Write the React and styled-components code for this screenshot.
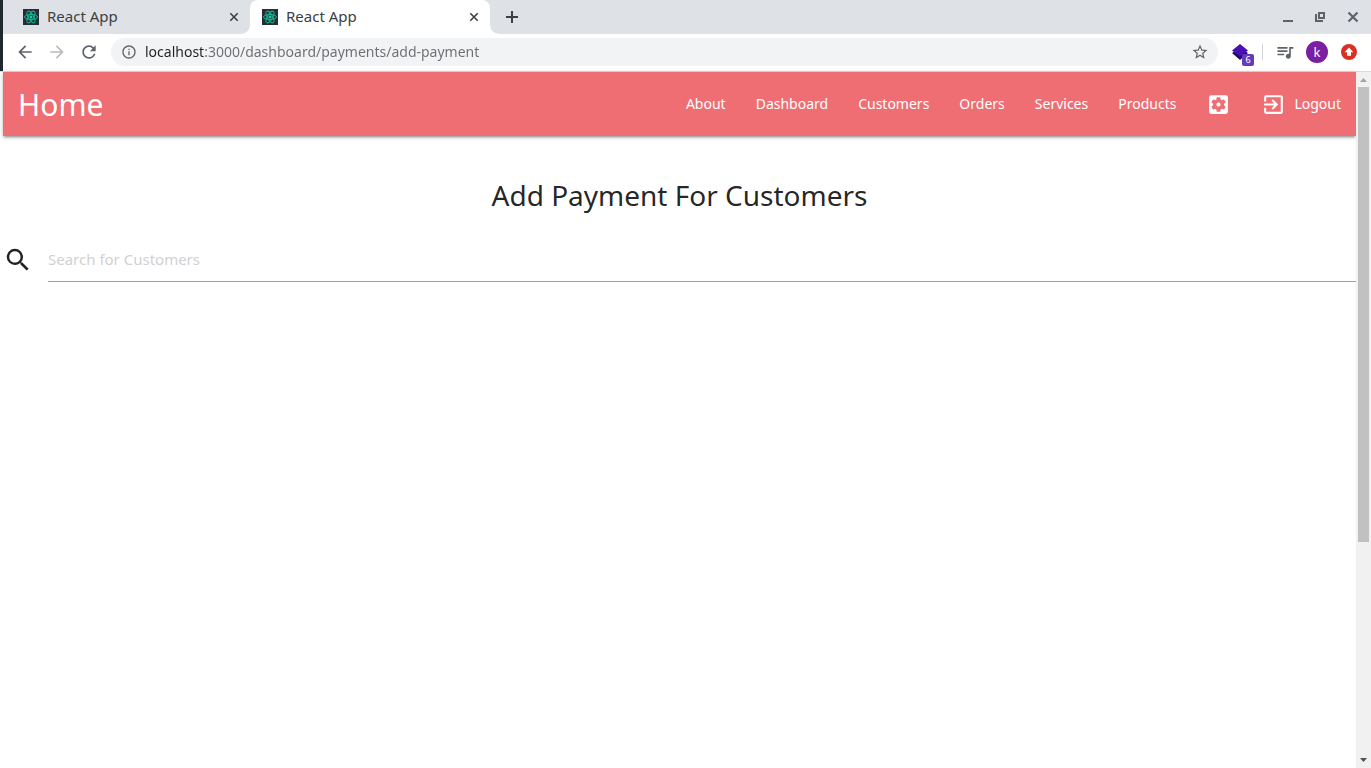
import React from "react";
import styled, { createGlobalStyle, css } from "styled-components";
import {
  MdArrowBack,
  MdArrowForward,
  MdRefresh,
  MdInfoOutline,
  MdStarBorder,
  MdQueueMusic,
  MdSettingsApplications,
  MdExitToApp,
  MdSearch,
} from "react-icons/md";

const Global = createGlobalStyle`
  *, *::before, *::after { box-sizing: border-box; }
  body { margin: 0; background: #fff; }
  button { padding: 0; border: 0; background: none; color: inherit; font: inherit; cursor: pointer; }
  svg { display: block; flex: none; }
  a { color: inherit; text-decoration: none; }
`;

const Window = styled.div`
  display: flex;
  flex-direction: column;
  min-height: 100vh;
  font-family: "Noto Sans", sans-serif;
  color: #3c4043;
`;

const Chrome = styled.header`
  border-left: 3px solid #1f282c;
`;

const TabStrip = styled.div`
  display: flex;
  height: 34px;
  background: #dee1e6;
`;

const Tab = styled.div`
  position: relative;
  display: flex;
  align-items: center;
  gap: 8px;
  width: ${(p) => (p.$active ? 240 : 247)}px;
  padding: 0 8px 0 ${(p) => (p.$active ? 12 : 20)}px;
  font-size: 15px;
  line-height: 20px;
  ${(p) =>
    p.$active &&
    css`
      background: #fff;
      border-radius: 8px 8px 0 0;
      &::before,
      &::after {
        content: "";
        position: absolute;
        bottom: 0;
        width: 8px;
        height: 8px;
      }
      &::before {
        right: 100%;
        background: radial-gradient(circle at 0 0, transparent 7px, #fff 8px);
      }
      &::after {
        left: 100%;
        background: radial-gradient(circle at 100% 0, transparent 7px, #fff 8px);
      }
    `}
`;

const TabTitle = styled.span`
  flex: 1;
  padding-bottom: 2px;
`;

const IconButton = styled.button`
  display: flex;
  align-items: center;
  justify-content: center;
  flex: none;
  width: ${(p) => p.$size || 16}px;
  height: ${(p) => p.$size || 16}px;
  color: ${(p) => p.$color || "#5f6368"};
`;

const NewTab = styled(IconButton)`
  align-self: center;
  margin-left: 12px;
`;

const WindowControls = styled.div`
  display: flex;
  align-items: center;
  gap: 16px;
  margin-left: auto;
  padding-right: 10px;
`;

const Toolbar = styled.div`
  display: flex;
  align-items: center;
  height: 37px;
  padding: 0 14px 1px 12px;
`;

const History = styled.div`
  display: flex;
  gap: 12px;
`;

const AddressBar = styled.div`
  display: flex;
  align-items: center;
  flex: 1;
  gap: 8px;
  height: 28px;
  margin: 0 12px;
  padding: 0 10px;
  border-radius: 14px;
  background: #f1f3f4;
  color: #5f6368;
`;

/* The host part of the address is darker than the path that follows it. */
const Address = styled.input`
  flex: 1;
  min-width: 0;
  height: 20px;
  padding: 0;
  border: 0;
  outline: 0;
  background: linear-gradient(90deg, #202124 60px, #6b6e72 60px);
  background-clip: text;
  -webkit-background-clip: text;
  color: transparent;
  caret-color: #202124;
  font-family: "Noto Sans", sans-serif;
  font-size: 14px;
  line-height: 20px;
`;

const Extensions = styled.div`
  display: flex;
  align-items: center;
`;

const LayersButton = styled(IconButton)`
  position: relative;
`;

const Count = styled.span`
  position: absolute;
  left: 12px;
  top: 12px;
  width: 12px;
  height: 12px;
  border-radius: 2px;
  background: #673ab7;
  color: #fff;
  font-size: 9px;
  line-height: 12px;
  text-align: center;
`;

const Divider = styled.span`
  width: 1px;
  height: 16px;
  margin: 0 12px;
  background: #d0d3d7;
`;

const Avatar = styled.button`
  width: 22px;
  height: 22px;
  margin: 0 13px 0 11px;
  border-radius: 50%;
  background: #7b1fa2;
  color: #fff;
  font-size: 13px;
  line-height: 20px;
`;

const Viewport = styled.div`
  display: flex;
  flex: 1;
  border-top: 1px solid #dadce0;
`;

const Page = styled.div`
  flex: 1;
  min-width: 0;
  padding-left: 3px;
  color: rgba(0, 0, 0, 0.87);
`;

const NavBar = styled.nav`
  display: flex;
  align-items: center;
  justify-content: space-between;
  height: 64px;
  padding-left: 15px;
  background: #ee6e73;
  color: #fff;
  box-shadow: 0 2px 2px 0 rgba(0, 0, 0, 0.14), 0 3px 1px -2px rgba(0, 0, 0, 0.12),
    0 1px 5px 0 rgba(0, 0, 0, 0.2);
`;

const Brand = styled.a`
  padding-top: 2px;
  font-size: 30px;
  line-height: 62px;
`;

const NavList = styled.ul`
  display: flex;
  margin: 0;
  padding: 0;
  list-style: none;
`;

const NavLink = styled.a`
  display: flex;
  align-items: center;
  gap: 8px;
  height: 64px;
  padding: 0 15px;
  font-size: 14px;
  line-height: 20px;
`;

const Title = styled.h1`
  margin: 39px 0 22px;
  font-size: 28px;
  font-weight: 400;
  line-height: 40px;
  text-align: center;
`;

const SearchField = styled.label`
  display: flex;
  align-items: center;
  gap: 15px;
`;

const SearchInput = styled.input`
  flex: 1;
  min-width: 0;
  height: 45px;
  padding: 0;
  border: 0;
  border-bottom: 1px solid #9e9e9e;
  outline: 0;
  background: transparent;
  font-family: "Noto Sans", sans-serif;
  font-size: 15px;

  &::placeholder {
    color: #d1d1d1;
  }
`;

const ScrollTrack = styled.div`
  display: flex;
  flex-direction: column;
  align-items: center;
  width: 15px;
  background: #f1f1f1;
`;

const ScrollArrow = styled(IconButton)`
  width: 15px;
  height: 15px;
`;

const ScrollThumb = styled.div`
  flex: 456;
  width: 11px;
  background: #c1c1c1;
`;

const ScrollRest = styled.div`
  flex: 211;
`;

function Favicon() {
  return (
    <svg width="16" height="16" viewBox="0 0 16 16" aria-hidden="true">
      <rect width="16" height="16" fill="#282c34" />
      <g fill="none" stroke="#10b890" strokeWidth="1">
        <ellipse cx="8" cy="8" rx="6.5" ry="2.6" />
        <ellipse cx="8" cy="8" rx="6.5" ry="2.6" transform="rotate(60 8 8)" />
        <ellipse cx="8" cy="8" rx="6.5" ry="2.6" transform="rotate(120 8 8)" />
      </g>
      <circle cx="8" cy="8" r="1.5" fill="#12d6a4" />
    </svg>
  );
}

function BrowserTab({ active }) {
  return (
    <Tab $active={active}>
      <Favicon />
      <TabTitle>React App</TabTitle>
      <IconButton aria-label="Close tab" $color="#3c4043">
        <svg width="16" height="16" viewBox="0 0 16 16">
          <path d="M4.300 4.300l7.400 7.400M11.700 4.300l-7.400 7.400" stroke="currentColor" strokeWidth="1.600" />
        </svg>
      </IconButton>
    </Tab>
  );
}

const links = ["About", "Dashboard", "Customers", "Orders", "Services", "Products"];

export default function App() {
  return (
    <Window>
      <Global />
      <Chrome>
        <TabStrip>
          <BrowserTab />
          <BrowserTab active />
          <NewTab $size={20} $color="#3c4043" aria-label="New tab">
            <svg width="20" height="20" viewBox="0 0 20 20">
              <path d="M10 4v12M4 10h12" stroke="currentColor" strokeWidth="2" />
            </svg>
          </NewTab>
          <WindowControls>
            <IconButton aria-label="Minimize">
              <svg width="16" height="16" viewBox="0 0 16 16">
                <path d="M2 12h10" stroke="currentColor" strokeWidth="2" />
              </svg>
            </IconButton>
            <IconButton aria-label="Restore">
              <svg width="16" height="16" viewBox="0 0 16 16" fill="none" stroke="currentColor">
                <path d="M6 4h5v5H6z" strokeWidth="2" />
                <path d="M3 5v7h7" strokeWidth="2" />
              </svg>
            </IconButton>
            <IconButton aria-label="Close window">
              <svg width="16" height="16" viewBox="0 0 16 16">
                <path d="M3.500 3.500l9 9M12.500 3.500l-9 9" stroke="currentColor" strokeWidth="2.200" />
              </svg>
            </IconButton>
          </WindowControls>
        </TabStrip>
        <Toolbar>
          <History>
            <IconButton $size={20} aria-label="Back"><MdArrowBack size={20} /></IconButton>
            <IconButton $size={20} $color="#babcbe" aria-label="Forward"><MdArrowForward size={20} /></IconButton>
            <IconButton $size={20} aria-label="Reload"><MdRefresh size={20} /></IconButton>
          </History>
          <AddressBar>
            <MdInfoOutline size={16} />
            <Address
              type="text"
              aria-label="Address"
              defaultValue="localhost:3000/dashboard/payments/add-payment"
            />
            <IconButton aria-label="Bookmark"><MdStarBorder size={18} /></IconButton>
          </AddressBar>
          <Extensions>
            <LayersButton $size={20} aria-label="Layers extension">
              <svg width="20" height="20" viewBox="0 0 20 20">
                <path d="M2 11l8-5 8 5-8 7z" fill="#1f0a6b" />
                <path d="M2 8.500l8-6.500 8 6.500-8 6z" fill="#4a0fb5" />
              </svg>
              <Count>6</Count>
            </LayersButton>
            <Divider />
            <IconButton $size={20} aria-label="Media controls"><MdQueueMusic size={20} /></IconButton>
            <Avatar>k</Avatar>
            <IconButton aria-label="Update">
              <svg width="16" height="16" viewBox="0 0 16 16">
                <circle cx="8" cy="8" r="8" fill="#d93025" />
                <path d="M8 3.500L12.300 8.200H10V11.800H6V8.200H3.700z" fill="#fff" />
              </svg>
            </IconButton>
          </Extensions>
        </Toolbar>
      </Chrome>
      <Viewport>
        <Page>
          <NavBar>
            <Brand href="#home">Home</Brand>
            <NavList>
              {links.map((name) => (
                <li key={name}><NavLink href={"#" + name.toLowerCase()}>{name}</NavLink></li>
              ))}
              <li><NavLink href="#settings" aria-label="Settings"><MdSettingsApplications size={25} /></NavLink></li>
              <li><NavLink href="#logout"><MdExitToApp size={25} />Logout</NavLink></li>
            </NavList>
          </NavBar>
          <main>
            <Title>Add Payment For Customers</Title>
            <SearchField>
              <MdSearch size={30} />
              <SearchInput type="text" aria-label="Search for Customers" placeholder="Search for Customers" />
            </SearchField>
          </main>
        </Page>
        <ScrollTrack>
          <ScrollArrow $color="#a3a3a3" aria-label="Scroll up">
            <svg width="15" height="15" viewBox="0 0 15 15"><path d="M4 10l3.500-4 3.500 4z" fill="currentColor" /></svg>
          </ScrollArrow>
          <ScrollThumb />
          <ScrollRest />
          <ScrollArrow $color="#505050" aria-label="Scroll down">
            <svg width="15" height="15" viewBox="0 0 15 15"><path d="M4 5l3.500 4L11 5z" fill="currentColor" /></svg>
          </ScrollArrow>
        </ScrollTrack>
      </Viewport>
    </Window>
  );
}
